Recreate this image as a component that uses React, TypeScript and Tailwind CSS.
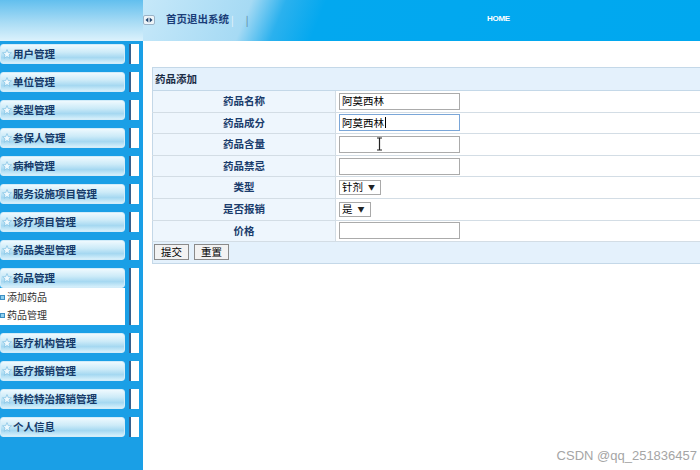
type MenuItem = {
  title: string;
  children?: string[];
};

const menus: MenuItem[] = [
  { title: '用户管理' },
  { title: '单位管理' },
  { title: '类型管理' },
  { title: '参保人管理' },
  { title: '病种管理' },
  { title: '服务设施项目管理' },
  { title: '诊疗项目管理' },
  { title: '药品类型管理' },
  { title: '药品管理', children: ['添加药品', '药品管理'] },
  { title: '医疗机构管理' },
  { title: '医疗报销管理' },
  { title: '特检特治报销管理' },
  { title: '个人信息' },
];

function Star() {
  return (
    <svg width="10" height="10" viewBox="0 0 10 10" className="shrink-0">
      <polygon
        points="5,0.6 6.3,3.6 9.5,3.8 7,5.9 7.8,9.3 5,7.5 2.2,9.3 3,5.9 0.5,3.8 3.7,3.6"
        fill="#eef9fe"
        stroke="#88c5e6"
        strokeWidth="0.8"
      />
    </svg>
  );
}

function Sidebar() {
  return (
    <aside className="flex w-[143px] shrink-0 flex-col gap-[8px] bg-[#1a9fe6] pt-[3px]">
      {menus.map((m) => (
        <div key={m.title} className="flex">
          <div className="flex w-[125px] flex-col">
            <div className="flex h-[20px] items-center gap-[1px] rounded-[3px] border border-[#d2ecf9] bg-[linear-gradient(to_bottom,#eef9fe_0%,#cdebf8_40%,#a5d8f1_70%,#d6f0fb_100%)] pl-[1px] text-[10.5px] leading-none font-bold text-[#153a69]">
              <Star />
              {m.title}
            </div>
            {m.children && (
              <div className="h-[37px] bg-white">
                {m.children.map((c) => (
                  <div
                    key={c}
                    className="flex h-[18px] items-center gap-[2px] text-[10px] leading-none text-[#333]"
                  >
                    <span className="h-[5px] w-[5px] border border-[#3d8fc4] bg-[#8fd0ee]" />
                    {c}
                  </div>
                ))}
              </div>
            )}
          </div>
          <div className="ml-[4px] w-[10px] border-l-2 border-[#36608e] bg-white" />
        </div>
      ))}
    </aside>
  );
}

function TextBox({ value, focused }: { value?: string; focused?: boolean }) {
  return (
    <div
      className={`flex h-[17px] w-[121px] items-center border px-[2px] text-[10.5px] leading-none text-black ${
        focused ? 'border-[#7aa6d8]' : 'border-[#ababab]'
      } bg-white`}
    >
      {value}
      {focused && <span className="ml-[1px] h-[11px] w-px bg-black" />}
    </div>
  );
}

function Select({ value, width }: { value: string; width: string }) {
  return (
    <div
      className={`flex h-[15px] items-center gap-[5px] border border-[#a9a9a9] bg-white pl-[2px] text-[10.5px] leading-none text-black ${width}`}
    >
      {value}
      <span className="text-[7px] text-[#222]">▼</span>
    </div>
  );
}

const rows: { label: string; field: React.ReactNode }[] = [
  { label: '药品名称', field: <TextBox value="阿莫西林" /> },
  { label: '药品成分', field: <TextBox value="阿莫西林" focused /> },
  { label: '药品含量', field: <TextBox /> },
  { label: '药品禁忌', field: <TextBox /> },
  { label: '类型', field: <Select value="针剂" width="w-[42px]" /> },
  { label: '是否报销', field: <Select value="是" width="w-[32px]" /> },
  { label: '价格', field: <TextBox /> },
];

export default function App() {
  return (
    <div className="relative h-[470px] w-[700px] overflow-hidden bg-white font-['Noto_Sans_CJK_SC','Liberation_Sans',sans-serif]">
      <header className="flex h-[41px]">
        <div className="w-[143px] bg-[linear-gradient(to_bottom,#62bfee_0%,#a9dcf5_55%,#dcf2fc_100%)]" />
        <div className="flex flex-1 items-center bg-[linear-gradient(112deg,#c6e8f9_0%,#a6daf4_19%,#2bb1ee_25%,#03a8ef_32%,#00a8ef_100%)]">
          <div className="flex w-[344px] items-center pb-[2px]">
            <svg width="12" height="10" viewBox="0 0 12 10" className="shrink-0">
              <rect x="0.5" y="0.5" width="11" height="9" rx="1.5" fill="#eef4f8" stroke="#9bb4c8" />
              <polygon points="2.5,5 5.3,2.6 5.3,7.4" fill="#21446e" />
              <polygon points="9.5,5 6.7,2.6 6.7,7.4" fill="#21446e" />
            </svg>
            <span className="ml-[11px] text-[10.5px] leading-none font-bold text-[#1a3d78]">
              首页退出系统
            </span>
            <span className="ml-[2px] text-[10px] leading-none text-[#e8f4fb]">|</span>
            <span className="ml-[12px] text-[10px] leading-none text-[#5a7c98]">|</span>
          </div>
          <span className="pb-[4px] text-[8px] leading-none font-bold tracking-[-0.3px] text-white font-['Liberation_Sans',sans-serif]">
            HOME
          </span>
        </div>
      </header>

      <div className="flex h-[429px]">
        <Sidebar />
        <main className="flex-1 overflow-hidden bg-white pt-[26px] pl-[9px]">
          <table className="w-[560px] border-collapse border border-[#c4d8e8]">
            <tbody>
              <tr>
                <td
                  colSpan={2}
                  className="h-[23px] border-b border-[#c4d8e8] bg-[#e4f1fc] pl-[2px] text-[10.5px] leading-none font-bold text-[#1b2c45]"
                >
                  药品添加
                </td>
              </tr>
              {rows.map((r) => (
                <tr key={r.label}>
                  <td className="h-[21.6px] w-[183px] border-r border-b border-[#d3dde5] bg-[#eef6fd] text-center text-[10.5px] leading-none font-bold text-[#1a3c6c]">
                    {r.label}
                  </td>
                  <td className="border-b border-[#d3dde5] bg-white pl-[3px]">{r.field}</td>
                </tr>
              ))}
              <tr>
                <td colSpan={2} className="h-[21.6px] bg-[#e4f1fc] pl-px">
                  <div className="flex gap-[5px]">
                    {['提交', '重置'].map((b) => (
                      <button
                        key={b}
                        className="flex h-[16px] w-[35px] items-center justify-center border border-[#8a8a8a] bg-[#f2f2f2] text-[10.5px] leading-none text-black"
                      >
                        {b}
                      </button>
                    ))}
                  </div>
                </td>
              </tr>
            </tbody>
          </table>
        </main>
      </div>

      <svg width="7" height="14" viewBox="0 0 7 14" className="absolute left-[376px] top-[137px]">
        <path
          d="M1 1h2l0.5 0.5L4 1h2M3.5 1.5v11M1 13h2l0.5-0.5L4 13h2"
          fill="none"
          stroke="#222"
          strokeWidth="1.2"
        />
      </svg>

      <span className="absolute right-[3px] bottom-[8px] text-[13px] leading-none text-[#a5a5a5] font-['Liberation_Sans',sans-serif]">
        CSDN @qq_251836457
      </span>
    </div>
  );
}
